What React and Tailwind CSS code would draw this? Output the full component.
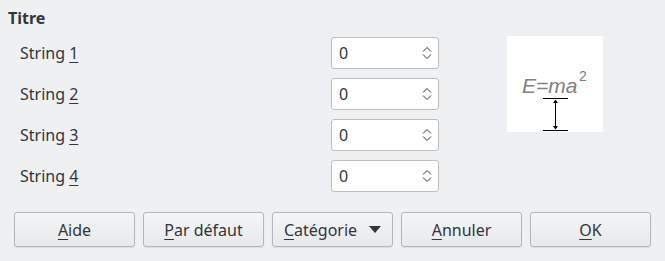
import React from "react";

function Spin() {
    return (
        <div className="w-[108px] h-[32px] bg-white border border-[#bcbec0] rounded-[3px] flex items-center pl-[7px] pr-[6px]">
            <span className="flex-grow text-[16px] text-[#31363b]">0</span>
            <svg width="10" height="18" viewBox="0 0 10 18" fill="none" stroke="#31363b" strokeWidth="1">
                <path d="M1 7.5 L5 3.5 L9 7.5" />
                <path d="M1 10.5 L5 14.5 L9 10.5" />
            </svg>
        </div>
    );
}

function Btn({ children }) {
    return (
        <button className="w-[121px] h-[35px] rounded-[3px] border border-[#b4b6b8] bg-gradient-to-b from-[#f4f5f6] to-[#e8e9ea] shadow-[0_1px_1px_rgba(0,0,0,0.08)] text-[16px] text-[#31363b] flex items-center justify-center">
            {children}
        </button>
    );
}

export default function App() {
    const rows = ["1", "2", "3", "4"];

    return (
        <div className="w-[665px] h-[261px] bg-[#eff0f1] text-[#31363b] font-['Noto_Sans',sans-serif] flex flex-col">
            <div className="pl-[8px] pt-[8px] text-[16px] font-bold leading-[20px]">Titre</div>

            <div className="flex flex-row pt-[9px]">
                <div className="flex flex-col gap-[9px]">
                    {rows.map((n) => (
                        <div key={n} className="flex flex-row items-center h-[32px]">
                            <span className="w-[331px] pl-[20px] text-[16px]">
                                String <u className="underline-offset-[3px]">{n}</u>
                            </span>
                            <Spin />
                        </div>
                    ))}
                </div>

                <div className="ml-[68px] mt-[-1px] w-[96px] h-[96px] bg-white">
                    <svg width="96" height="96" viewBox="0 0 96 96">
                        <text x="15" y="57" fontFamily="Liberation Sans, sans-serif" fontStyle="italic" fontSize="21" fill="#808080">E=ma</text>
                        <text x="72" y="45" fontFamily="Liberation Sans, sans-serif" fontSize="14" fill="#808080">2</text>
                        <line x1="36" y1="62.5" x2="61" y2="62.5" stroke="#000" strokeWidth="1" />
                        <line x1="36" y1="94.5" x2="61" y2="94.5" stroke="#000" strokeWidth="1" />
                        <line x1="48.5" y1="64" x2="48.5" y2="93" stroke="#000" strokeWidth="1" />
                        <path d="M46 67 L48.5 63.5 L51 67 Z" fill="#000" />
                        <path d="M46 90 L48.5 93.5 L51 90 Z" fill="#000" />
                    </svg>
                </div>
            </div>

            <div className="flex flex-row gap-[8px] pl-[14px] mt-[20px]">
                <Btn><u className="underline-offset-[3px]">A</u>ide</Btn>
                <Btn><u className="underline-offset-[3px]">P</u>ar défaut</Btn>
                <Btn>
                    <span className="mr-[12px]"><u className="underline-offset-[3px]">C</u>atégorie</span>
                    <svg width="12" height="7" viewBox="0 0 12 7"><path d="M0 0 L12 0 L6 7 Z" fill="#31363b" /></svg>
                </Btn>
                <Btn><u className="underline-offset-[3px]">A</u>nnuler</Btn>
                <Btn><u className="underline-offset-[3px]">O</u>K</Btn>
            </div>
        </div>
    );
}
